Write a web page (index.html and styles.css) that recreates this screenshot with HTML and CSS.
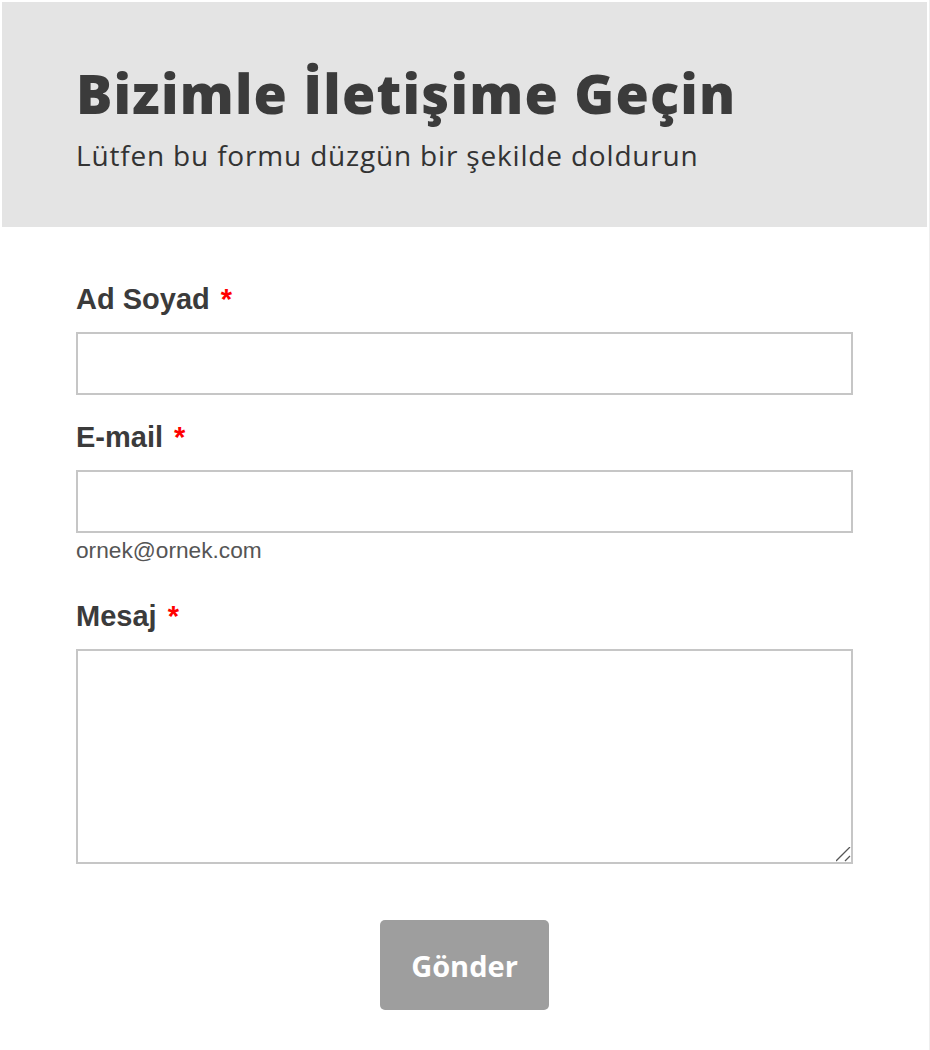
FILE: index.html
```html
<!DOCTYPE html>
<html lang="tr">
<head>
<meta charset="utf-8">
<title>Bizimle İletişime Geçin</title>
<link rel="stylesheet" href="styles.css">
</head>
<body>
<div class="frame">
  <header class="hero">
    <h1 class="hero-title">Bizimle İletişime Geçin</h1>
    <p class="hero-sub">Lütfen bu formu düzgün bir şekilde doldurun</p>
  </header>
  <form class="form">
    <div class="field">
      <label class="label" for="ad">Ad Soyad <span class="req">*</span></label>
      <input class="input" id="ad" type="text">
    </div>
    <div class="field">
      <label class="label" for="mail">E-mail <span class="req">*</span></label>
      <input class="input" id="mail" type="email">
      <div class="help">ornek@ornek.com</div>
    </div>
    <div class="field">
      <label class="label" for="msg">Mesaj <span class="req">*</span></label>
      <textarea class="textarea" id="msg"></textarea>
    </div>
    <div class="actions">
      <button class="btn" type="button">Gönder</button>
    </div>
  </form>
</div>
</body>
</html>
```
FILE: styles.css
```css
html, body {
  margin: 0;
  padding: 0;
  background: #ffffff;
}

.frame {
  box-sizing: border-box;
  width: 930px;
  min-height: 1050px;
  padding: 2px 2px 0 2px;
  border-right: 1px solid #eeeeee;
}

.hero {
  background: #e4e4e4;
  padding: 59px 74px 55px;
}

.hero-title {
  margin: 0;
  font-family: "Open Sans", sans-serif;
  font-weight: 800;
  font-size: 54px;
  line-height: 64px;
  letter-spacing: 1.2px;
  color: #3b3b3b;
}

.hero-sub {
  margin: 13px 0 0;
  font-family: "Open Sans", sans-serif;
  font-weight: 400;
  font-size: 28px;
  line-height: 34px;
  letter-spacing: 0.82px;
  color: #333333;
}

.form {
  padding: 55px 74px 0;
  font-family: "Liberation Sans", Arial, sans-serif;
}

.field + .field {
  margin-top: 25px;
}

.label {
  display: block;
  font-weight: 700;
  font-size: 29px;
  line-height: 34px;
  color: #3b3b3b;
  margin-bottom: 16px;
}

.req {
  color: #ff0000;
  margin-left: 3px;
}

.input,
.textarea {
  display: block;
  box-sizing: border-box;
  width: 100%;
  margin: 0;
  border: 2px solid #c6c6c6;
  background: #ffffff;
  font-family: "Liberation Sans", Arial, sans-serif;
  font-size: 22px;
}

.input {
  height: 63px;
}

.textarea {
  height: 215px;
  resize: vertical;
}

.textarea::-webkit-resizer {
  background-color: transparent;
  background-image: url("data:image/svg+xml,%3Csvg xmlns='http://www.w3.org/2000/svg' width='16' height='16'%3E%3Cpath d='M1 15 L15 1 M10 15 L15 10' stroke='%23555' stroke-width='1.3' fill='none'/%3E%3C/svg%3E");
  background-repeat: no-repeat;
  background-position: right bottom;
}

.help {
  margin-top: 4px;
  margin-bottom: 36px;
  font-size: 22.7px;
  line-height: 26px;
  color: #555555;
}

.actions {
  margin-top: 56px;
  display: flex;
  justify-content: center;
}

.btn {
  width: 169px;
  height: 90px;
  border: none;
  border-radius: 5px;
  background: #9e9e9e;
  color: #ffffff;
  font-family: "Open Sans", sans-serif;
  font-weight: 700;
  font-size: 29px;
  padding: 0;
}
```
